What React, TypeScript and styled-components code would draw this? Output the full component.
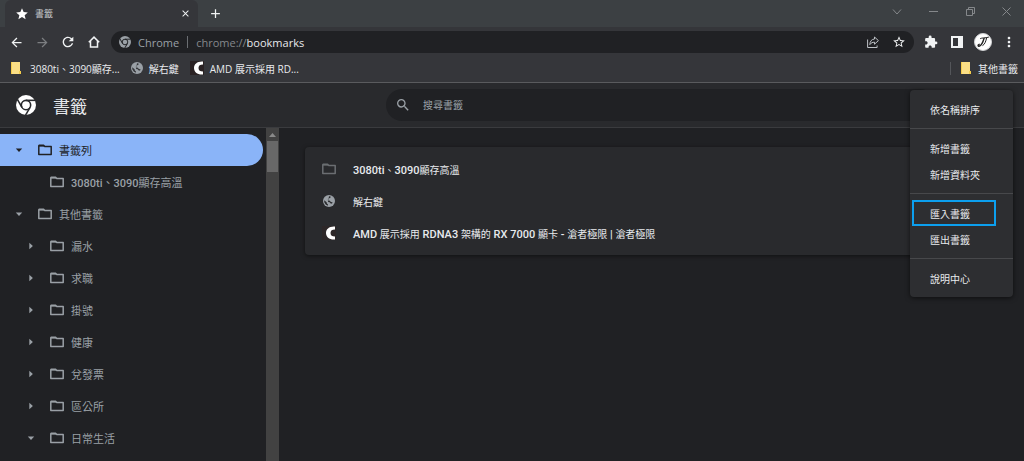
import React from 'react';
import styled, { createGlobalStyle } from 'styled-components';
import {
  MdArrowBack,
  MdArrowForward,
  MdClose,
  MdAdd,
  MdExtension,
  MdMoreVert,
  MdRefresh,
  MdSearch,
  MdStar,
  MdStarBorder,
} from 'react-icons/md';

const uiFont = `'Open Sans', 'Noto Sans CJK TC', sans-serif`;
const pageFont = `Roboto, 'Noto Sans CJK TC', sans-serif`;

const GlobalStyle = createGlobalStyle`
  *, *::before, *::after { box-sizing: border-box; }
  body {
    margin: 0;
    background: #202124;
    color: #e8eaed;
    font-family: ${pageFont};
    font-size: 10px;
  }
  button, input {
    margin: 0;
    padding: 0;
    border: 0;
    background: none;
    color: inherit;
    font: inherit;
  }
  button { cursor: pointer; }
  a { color: inherit; text-decoration: none; }
  svg { display: block; flex: none; }
  ul { margin: 0; padding: 0; list-style: none; }
`;

const Window = styled.div`
  display: flex;
  flex-direction: column;
  min-height: 100vh;
`;

/* Browser frame */
const TabStrip = styled.header`
  display: flex;
  align-items: stretch;
  height: 27px;
  padding-left: 5px;
  background: #3c4043;
  font-family: ${uiFont};
`;

const Tab = styled.div`
  display: flex;
  align-items: center;
  width: 193px;
  padding: 0 7px 0 10px;
  border-radius: 6px 6px 0 0;
  background: #35363a;
  color: #c6c8ca;
  font-size: 9px;
`;

const TabTitle = styled.span`
  flex: 1;
  margin-left: 6px;
`;

const IconButton = styled.button<{ $dim?: boolean }>`
  display: flex;
  align-items: center;
  justify-content: center;
  width: 20px;
  height: 20px;
  flex: none;
  color: ${(p) => (p.$dim ? '#7c7e81' : '#f1f3f4')};
`;

const TabClose = styled(IconButton)`
  width: 12px;
`;

const NewTab = styled(IconButton)`
  align-self: center;
  margin-left: 7px;
`;

const WindowControls = styled.div`
  display: flex;
  margin-left: auto;
`;

const WindowButton = styled.button`
  display: flex;
  align-items: center;
  justify-content: center;
  width: 37px;
  height: 23px;
  color: #85888b;

  &:last-child { width: 35px; }
`;

const Toolbar = styled.div`
  display: flex;
  align-items: center;
  gap: 6px;
  height: 30px;
  padding: 0 5px 0 6px;
  background: #35363a;
`;

const Omnibox = styled.div`
  display: flex;
  align-items: center;
  flex: 1;
  height: 22px;
  margin: 0 1px;
  padding: 0 5px 0 8px;
  border-radius: 11px;
  background: #202124;
  color: #9aa0a6;
  font-family: ${uiFont};
  font-size: 11px;
`;

const SiteLabel = styled.label`
  display: flex;
  align-items: center;
  margin-left: 7px;
`;

const SiteDivider = styled.span`
  width: 1px;
  height: 12px;
  margin: 0 8px;
  background: #6b6e72;
`;

const Scheme = styled.span`
  color: #84888c;
`;

const AddressInput = styled.input`
  flex: 1;
  min-width: 0;
  color: #e8eaed;
  outline: none;
`;

const OmniboxActions = styled.div`
  display: flex;
  gap: 6px;
`;

const Avatar = styled.span`
  display: flex;
  align-items: center;
  justify-content: center;
  width: 18px;
  height: 18px;
  flex: none;
  border: 1px solid #d0d1d3;
  border-radius: 50%;
  background: #fff;
`;

const BookmarksBar = styled.nav`
  display: flex;
  align-items: center;
  height: 26px;
  padding: 0 6px 3px 11px;
  border-bottom: 1px solid #5a5b5e;
  background: #35363a;
  font-family: ${uiFont};
`;

const BarLink = styled.a`
  display: flex;
  align-items: center;
  gap: 6px;
  margin-right: 11px;
  white-space: nowrap;

  &:last-child { margin-right: 0; }
`;

const FolderBarLink = styled(BarLink)`
  gap: 8px;
`;

const BarDivider = styled.span`
  width: 1px;
  height: 13px;
  margin: 0 10px 0 auto;
  background: #54565a;
`;

/* Bookmark manager */
const Manager = styled.div`
  position: relative;
  display: flex;
  flex-direction: column;
  flex: 1;
`;

const ManagerHeader = styled.div`
  display: flex;
  align-items: center;
  height: 45px;
  padding: 0 88px 0 16px;
  border-bottom: 1px solid #3a3b3e;
  background: #292a2d;
`;

const Brand = styled.div`
  display: flex;
  align-items: center;
  gap: 17px;
  width: 370px;
  color: #fff;
`;

const Title = styled.h1`
  margin: 0;
  color: #e8eaed;
  font-size: 17px;
  font-weight: 400;
`;

const SearchBox = styled.label`
  display: flex;
  align-items: center;
  gap: 12px;
  flex: 1;
  height: 32px;
  padding: 0 9px;
  border-radius: 16px;
  background: #202124;
  color: #9aa0a6;
`;

const SearchInput = styled.input`
  flex: 1;
  min-width: 0;
  outline: none;

  &::placeholder { color: #9aa0a6; opacity: 1; }
`;

const Body = styled.div`
  display: flex;
  flex: 1;
`;

const Sidebar = styled.nav`
  width: 266px;
  padding: 6px 3px 0 0;
`;

const TreeRow = styled.button<{ $level: number; $selected?: boolean }>`
  display: flex;
  align-items: center;
  width: 100%;
  height: 32px;
  padding-left: ${(p) => 11 + p.$level * 12}px;
  border-radius: 0 16px 16px 0;
  background: ${(p) => (p.$selected ? '#8ab4f8' : 'transparent')};
  color: ${(p) => (p.$selected ? '#202124' : '#9aa0a6')};
  font-size: 11px;
  white-space: nowrap;
`;

const ArrowSlot = styled.span`
  display: flex;
  justify-content: center;
  width: 16px;
  margin-right: 11px;
`;

const TreeLabel = styled.span`
  margin-left: 7px;
`;

const Latin = styled.span`
  font-size: 11px;
  font-weight: 500;
`;

const ScrollTrack = styled.div`
  width: 13px;
  background: #424242;
`;

const ScrollUp = styled.button`
  display: flex;
  align-items: center;
  justify-content: center;
  width: 13px;
  height: 13px;
  color: #8a8a8a;
`;

const ScrollThumb = styled.div`
  height: 31px;
  margin: 0 1px;
  background: #686868;
`;

const Content = styled.main`
  flex: 1;
  padding: 19px 26px;
`;

const Card = styled.ul`
  padding: 6px 0;
  border-radius: 4px;
  background: #292a2d;
  box-shadow: 0 1px 4px rgba(0, 0, 0, 0.5);
`;

const BookmarkLink = styled.a`
  display: flex;
  align-items: center;
  gap: 17px;
  height: 32px;
  padding-left: 17px;
`;

const IconSlot = styled.span<{ $color: string }>`
  display: flex;
  justify-content: center;
  width: 14px;
  color: ${(p) => p.$color};
`;

const Menu = styled.div`
  position: absolute;
  top: 7px;
  right: 11px;
  width: 103px;
  padding: 6px 0;
  border-radius: 4px;
  background: #2d2e31;
  box-shadow: 0 1px 5px rgba(0, 0, 0, 0.6);
`;

const MenuItem = styled.button<{ $marked?: boolean }>`
  position: relative;
  display: block;
  width: 100%;
  height: 26px;
  padding-left: 20px;
  text-align: left;

  &::after {
    content: '';
    display: ${(p) => (p.$marked ? 'block' : 'none')};
    position: absolute;
    inset: 0 17px 0 2px;
    border: 2px solid #0c9fee;
  }
`;

const MenuDivider = styled.hr`
  height: 1px;
  margin: 6px 0;
  border: 0;
  background: #47484b;
`;

const ChromeIcon = ({ size, gap }: { size: number; gap: string }) => (
  <svg width={size} height={size} viewBox="0 0 24 24">
    <circle cx="12" cy="12" r="12" fill="currentColor" />
    <g stroke={gap} strokeWidth="1.900" fill="none">
      <circle cx="12" cy="12" r="5.600" />
      <path d="M12 6.400h11" />
      <path d="M12 6.400h11" transform="rotate(120 12 12)" />
      <path d="M12 6.400h11" transform="rotate(240 12 12)" />
    </g>
  </svg>
);

const GlobeIcon = ({ land }: { land: string }) => (
  <svg width="12" height="12" viewBox="0 0 12 12">
    <circle cx="6" cy="6" r="6" fill="#9aa0a6" />
    <path d="M6 1.300 7.600 1.600 7.300 2.900 6 3.300 5.800 4.500 4.400 5.100 6.800 5.700 7.900 6.900 9.500 7.200 9.300 8.200 8 8.800 6.600 7.300 5 7z" fill={land} />
    <path d="M1.200 5.200 3.600 7.300 3.900 8.500 5 9.500 4.900 10.700 2.700 9.500 1.300 7.300z" fill={land} />
  </svg>
);

const FolderIcon = () => (
  <svg width="14" height="12" viewBox="0 0 14 12" fill="none" stroke="currentColor" strokeWidth="1.500" strokeLinejoin="round">
    <path d="M.8 1.800v8.600h12.400V2.600H6.800L5.600 1.300H1.200z" />
    <path d="M1 1.900h5" />
  </svg>
);

const FolderColorIcon = () => (
  <svg width="11" height="12" viewBox="0 0 11 12">
    <path d="M0 0h9v9h1v3H0z" fill="#fbdf86" />
    <path d="M0 0h1v12H0zM8 9h2v3H8z" fill="#f5cd4c" />
  </svg>
);

const CrescentIcon = ({ size, backdrop }: { size: number; backdrop: string }) => (
  <svg width={size} height={size} viewBox="0 0 14 14">
    <path d="M0 0h14v14H0z" fill={backdrop} />
    <path d="M13 .5C7.500 0 4 3 4 7s3.500 7 9 6.500v-3C10 10.500 8.500 9.500 8.500 7S10 3.500 13 3.500z" fill="#fff" />
  </svg>
);

const HomeIcon = () => (
  <svg width="12" height="12" viewBox="0 0 12 12" fill="none" stroke="currentColor" strokeWidth="1.500">
    <path d="M.8 6.300 6 1.100l5.200 5.200M2.500 5v6h7V5" />
  </svg>
);

const ShareIcon = () => (
  <svg width="12" height="12" viewBox="0 0 12 12" fill="none" stroke="#bdc1c6" strokeWidth="1">
    <path d="M.6 3.500v8h9.500V9.500" />
    <path d="M7.500 1v2C4.500 3.300 3 5.300 2.800 8.600 4 6.900 5.500 6.200 7.500 6.200v2L11.400 4.600z" strokeLinejoin="round" />
  </svg>
);

const SidePanelIcon = () => (
  <svg width="12" height="12" viewBox="0 0 12 12">
    <path fill="currentColor" d="M0 0h12v12H0z" />
    <path fill="#35363a" d="M2 2h5v8H2z" />
  </svg>
);

const SignatureIcon = () => (
  <svg width="14" height="14" viewBox="0 0 14 14" fill="none" stroke="#222" strokeLinecap="round">
    <path d="M4.500 3.500C6 2.600 9 3.300 12.500 2.200" />
    <path d="M8 3.500C7 7 5.500 10.500 3.300 11.200 1.800 11.500 1.500 10 3.200 9.300" strokeWidth="1.400" />
    <path d="M10.600 3C10 6 8.800 9.500 6.800 10.500" />
  </svg>
);

const ArrowIcon = ({ open }: { open: boolean }) => (
  <svg width="8" height="8" viewBox="0 0 8 8" fill="currentColor">
    <path d={open ? 'M.8 2.500h6.400L4 5.900z' : 'M2.300.8v6.400L5.900 4z'} />
  </svg>
);

/* Latin runs are set in a medium weight, Chinese runs stay regular. */
const MixedText = ({ text }: { text: string }) => (
  <span>
    {text.split(/([\x20-\x7e]+)/).map((run, i) => (i % 2 ? <Latin key={i}>{run}</Latin> : run))}
  </span>
);

type Node = { label: string; level: number; open?: boolean; selected?: boolean };

const tree: Node[] = [
  { label: '書籤列', level: 0, open: true, selected: true },
  { label: '3080ti、3090顯存高溫', level: 1 },
  { label: '其他書籤', level: 0, open: true },
  { label: '漏水', level: 1, open: false },
  { label: '求職', level: 1, open: false },
  { label: '掛號', level: 1, open: false },
  { label: '健康', level: 1, open: false },
  { label: '兌發票', level: 1, open: false },
  { label: '區公所', level: 1, open: false },
  { label: '日常生活', level: 1, open: true },
];

const bookmarks = [
  { label: '3080ti、3090顯存高溫', icon: <FolderIcon />, color: '#6b6e72' },
  { label: '解右鍵', icon: <GlobeIcon land="#292a2d" />, color: '#9aa0a6' },
  {
    label: 'AMD 展示採用 RDNA3 架構的 RX 7000 顯卡 - 滄者極限 | 滄者極限',
    icon: <CrescentIcon size={14} backdrop="#2d2728" />,
    color: '#fff',
  },
];

export default function App() {
  return (
    <Window lang="zh-Hant">
      <GlobalStyle />
      <TabStrip>
        <Tab>
          <MdStar size={14} color="#fff" />
          <TabTitle>書籤</TabTitle>
          <TabClose aria-label="關閉分頁"><MdClose size={11} /></TabClose>
        </Tab>
        <NewTab aria-label="新分頁"><MdAdd size={15} /></NewTab>
        <WindowControls>
          <WindowButton aria-label="搜尋分頁">
            <svg width="10" height="10" viewBox="0 0 10 10" fill="none" stroke="currentColor"><path d="m1 2.500 4 4.500 4-4.500" /></svg>
          </WindowButton>
          <WindowButton aria-label="最小化">
            <svg width="9" height="9" viewBox="0 0 9 9" fill="none" stroke="currentColor"><path d="M0 4.500h9" /></svg>
          </WindowButton>
          <WindowButton aria-label="還原">
            <svg width="9" height="9" viewBox="0 0 9 9" fill="none" stroke="currentColor"><path d="M.5 2.500h6v6h-6zM2.500 2.500v-2h6v6h-2" /></svg>
          </WindowButton>
          <WindowButton aria-label="關閉">
            <svg width="9" height="9" viewBox="0 0 9 9" fill="none" stroke="currentColor"><path d="m.5.5 8 8m0-8-8 8" /></svg>
          </WindowButton>
        </WindowControls>
      </TabStrip>

      <Toolbar>
        <IconButton aria-label="上一頁"><MdArrowBack size={15} /></IconButton>
        <IconButton aria-label="下一頁" $dim><MdArrowForward size={15} /></IconButton>
        <IconButton aria-label="重新載入"><MdRefresh size={16} /></IconButton>
        <IconButton aria-label="首頁"><HomeIcon /></IconButton>
        <Omnibox>
          <ChromeIcon size={12} gap="#202124" />
          <SiteLabel htmlFor="address">
            Chrome
            <SiteDivider />
            <Scheme>chrome://</Scheme>
          </SiteLabel>
          <AddressInput id="address" defaultValue="bookmarks" />
          <OmniboxActions>
            <IconButton aria-label="分享"><ShareIcon /></IconButton>
            <IconButton aria-label="加入書籤"><MdStarBorder size={14} /></IconButton>
          </OmniboxActions>
        </Omnibox>
        <IconButton aria-label="擴充功能"><MdExtension size={14} /></IconButton>
        <IconButton aria-label="側邊面板"><SidePanelIcon /></IconButton>
        <IconButton aria-label="個人資料"><Avatar><SignatureIcon /></Avatar></IconButton>
        <IconButton aria-label="選單"><MdMoreVert size={16} /></IconButton>
      </Toolbar>

      <BookmarksBar>
        <FolderBarLink href="#folder"><FolderColorIcon />3080ti、3090顯存...</FolderBarLink>
        <BarLink href="#key"><GlobeIcon land="#35363a" />解右鍵</BarLink>
        <BarLink href="#amd"><CrescentIcon size={14} backdrop="#2a2223" />AMD 展示採用 RD...</BarLink>
        <BarDivider />
        <BarLink href="#other"><FolderColorIcon />其他書籤</BarLink>
      </BookmarksBar>

      <Manager>
        <ManagerHeader>
          <Brand>
            <ChromeIcon size={20} gap="#292a2d" />
            <Title>書籤</Title>
          </Brand>
          <SearchBox>
            <MdSearch size={16} />
            <SearchInput type="search" placeholder="搜尋書籤" aria-label="搜尋書籤" />
          </SearchBox>
        </ManagerHeader>

        <Body>
          <Sidebar>
            {tree.map((node) => (
              <TreeRow key={node.label} $level={node.level} $selected={node.selected}>
                <ArrowSlot>{node.open !== undefined && <ArrowIcon open={node.open} />}</ArrowSlot>
                <FolderIcon />
                <TreeLabel><MixedText text={node.label} /></TreeLabel>
              </TreeRow>
            ))}
          </Sidebar>
          <ScrollTrack>
            <ScrollUp aria-label="向上捲動">
              <svg width="7" height="4" viewBox="0 0 7 4" fill="currentColor"><path d="M0 4 3.500 0 7 4z" /></svg>
            </ScrollUp>
            <ScrollThumb />
          </ScrollTrack>
          <Content>
            <Card>
              {bookmarks.map((item) => (
                <li key={item.label}>
                  <BookmarkLink href="#bookmark">
                    <IconSlot $color={item.color}>{item.icon}</IconSlot>
                    <MixedText text={item.label} />
                  </BookmarkLink>
                </li>
              ))}
            </Card>
          </Content>
        </Body>

        <Menu role="menu">
          <MenuItem role="menuitem">依名稱排序</MenuItem>
          <MenuDivider />
          <MenuItem role="menuitem">新增書籤</MenuItem>
          <MenuItem role="menuitem">新增資料夾</MenuItem>
          <MenuDivider />
          <MenuItem role="menuitem" $marked>匯入書籤</MenuItem>
          <MenuItem role="menuitem">匯出書籤</MenuItem>
          <MenuDivider />
          <MenuItem role="menuitem">說明中心</MenuItem>
        </Menu>
      </Manager>
    </Window>
  );
}
